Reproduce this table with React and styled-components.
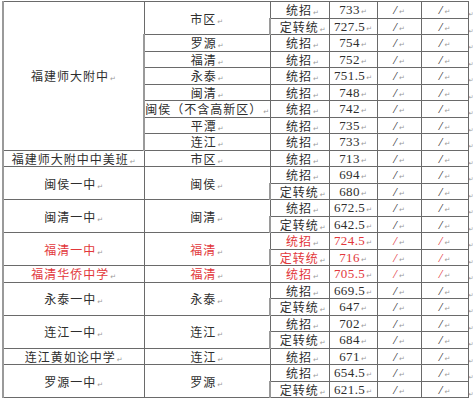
import React from 'react';
import styled, { createGlobalStyle } from 'styled-components';

const GlobalStyle = createGlobalStyle`
  html, body {
    margin: 0;
    padding: 0;
    background: #ffffff;
  }
  body {
    font-family: "Noto Sans CJK SC", "Noto Sans", sans-serif;
    overflow: hidden;
  }
`;

const Page = styled.div`
  width: 473px;
  height: 400px;
  overflow: hidden;
  padding: 1px 0 0 2px;
  box-sizing: border-box;
`;

const Table = styled.table`
  border-collapse: collapse;
  table-layout: fixed;
  width: 471px;
`;

const Col = styled.col`
  width: ${(p) => p.$w}px;
`;

const Row = styled.tr`
  height: 16.5px;
`;

const Cell = styled.td`
  border: 1px solid #6a6a6a;
  padding: 0 0 0 ${(p) => p.$pl || 0}px;
  height: 15.5px;
  line-height: 13px;
  text-align: center;
  vertical-align: middle;
  white-space: nowrap;
  overflow: hidden;
  font-size: 12px;
  letter-spacing: 1px;
  color: ${(p) => (p.$red ? '#e2373b' : '#2e2e2e')};
  &:first-child {
    border-left: 2px solid #9a9a9a;
  }
`;

const NumCell = styled(Cell)`
  font-family: "Liberation Serif", serif;
  font-size: 13px;
  letter-spacing: 0.4px;
`;

const SlashCell = styled(Cell)`
  font-family: "Liberation Serif", serif;
  font-size: 13px;
  font-style: italic;
`;

const EndCell = styled.td`
  border: none;
  padding: 0;
  line-height: 13px;
  height: 15.5px;
  vertical-align: middle;
  overflow: hidden;
`;

const Mark = styled.span`
  font-family: "DejaVu Sans", sans-serif;
  font-size: ${(p) => (p.$end ? 6 : 7)}px;
  line-height: 0;
  font-style: normal;
  color: #9a9a9a;
  letter-spacing: 0;
  margin-left: ${(p) => (p.$end ? 0 : 1)}px;
`;

const Wavy = styled.span`
  text-decoration: underline wavy #4f9e4f;
  text-decoration-thickness: 1px;
  text-underline-offset: 2px;
`;

const schools = [
  {
    name: '福建师大附中',
    areas: [
      { area: '市区', rows: [['统招', '733'], ['定转统', '727.5']] },
      { area: '罗源', rows: [['统招', '754']] },
      { area: '福清', rows: [['统招', '752']] },
      { area: '永泰', rows: [['统招', '751.5']] },
      { area: '闽清', rows: [['统招', '748']] },
      { area: '闽侯（不含高新区）', rows: [['统招', '742']] },
      { area: '平潭', rows: [['统招', '735']] },
      { area: '连江', rows: [['统招', '733']] },
    ],
  },
  { name: '福建师大附中中美班', areas: [{ area: '市区', rows: [['统招', '713']] }] },
  { name: '闽侯一中', areas: [{ area: '闽侯', rows: [['统招', '694'], ['定转统', '680']] }] },
  { name: '闽清一中', areas: [{ area: '闽清', rows: [['统招', '672.5'], ['定转统', '642.5']] }] },
  { name: '福清一中', red: true, areas: [{ area: '福清', rows: [['统招', '724.5'], ['定转统', '716']] }] },
  { name: '福清华侨中学', red: true, areas: [{ area: '福清', rows: [['统招', '705.5']] }] },
  { name: '永泰一中', areas: [{ area: '永泰', rows: [['统招', '669.5'], ['定转统', '647']] }] },
  { name: '连江一中', areas: [{ area: '连江', rows: [['统招', '702'], ['定转统', '684']] }] },
  { name: '连江黄如论中学', areas: [{ area: '连江', rows: [['统招', '671']] }] },
  { name: '罗源一中', areas: [{ area: '罗源', rows: [['统招', '654.5'], ['定转统', '621.5']] }] },
];

const widths = [141, 126, 59, 48, 44, 47, 6];

const M = ({ end }) => <Mark $end={end}>↵</Mark>;

const SchoolName = ({ name }) => {
  if (name === '连江黄如论中学') {
    return (
      <>
        连江黄如<Wavy>论中学</Wavy>
      </>
    );
  }
  return name;
};

const Kind = ({ kind }) => (kind === '定转统' ? <Wavy>定转统</Wavy> : kind);

export default function App() {
  const rows = [];
  schools.forEach((s) => {
    const total = s.areas.reduce((n, a) => n + a.rows.length, 0);
    s.areas.forEach((a, ai) => {
      a.rows.forEach(([kind, score], ri) => {
        rows.push(
          <Row key={`${s.name}-${a.area}-${ri}`}>
            {ai === 0 && ri === 0 && (
              <Cell rowSpan={total} $red={s.red}>
                <SchoolName name={s.name} />
                <M />
              </Cell>
            )}
            {ri === 0 && (
              <Cell rowSpan={a.rows.length} $red={s.red}>
                {a.area}
                <M />
              </Cell>
            )}
            <Cell $red={s.red} $pl={6}>
              <Kind kind={kind} />
              <M />
            </Cell>
            <NumCell $red={s.red}>
              {score}
              <M />
            </NumCell>
            <SlashCell $red={s.red}>
              /<M />
            </SlashCell>
            <SlashCell $red={s.red}>
              /<M />
            </SlashCell>
            <EndCell>
              <M end />
            </EndCell>
          </Row>
        );
      });
    });
  });

  return (
    <Page>
      <GlobalStyle />
      <Table>
        <colgroup>
          {widths.map((w, i) => (
            <Col key={i} $w={w} />
          ))}
        </colgroup>
        <tbody>{rows}</tbody>
      </Table>
    </Page>
  );
}
